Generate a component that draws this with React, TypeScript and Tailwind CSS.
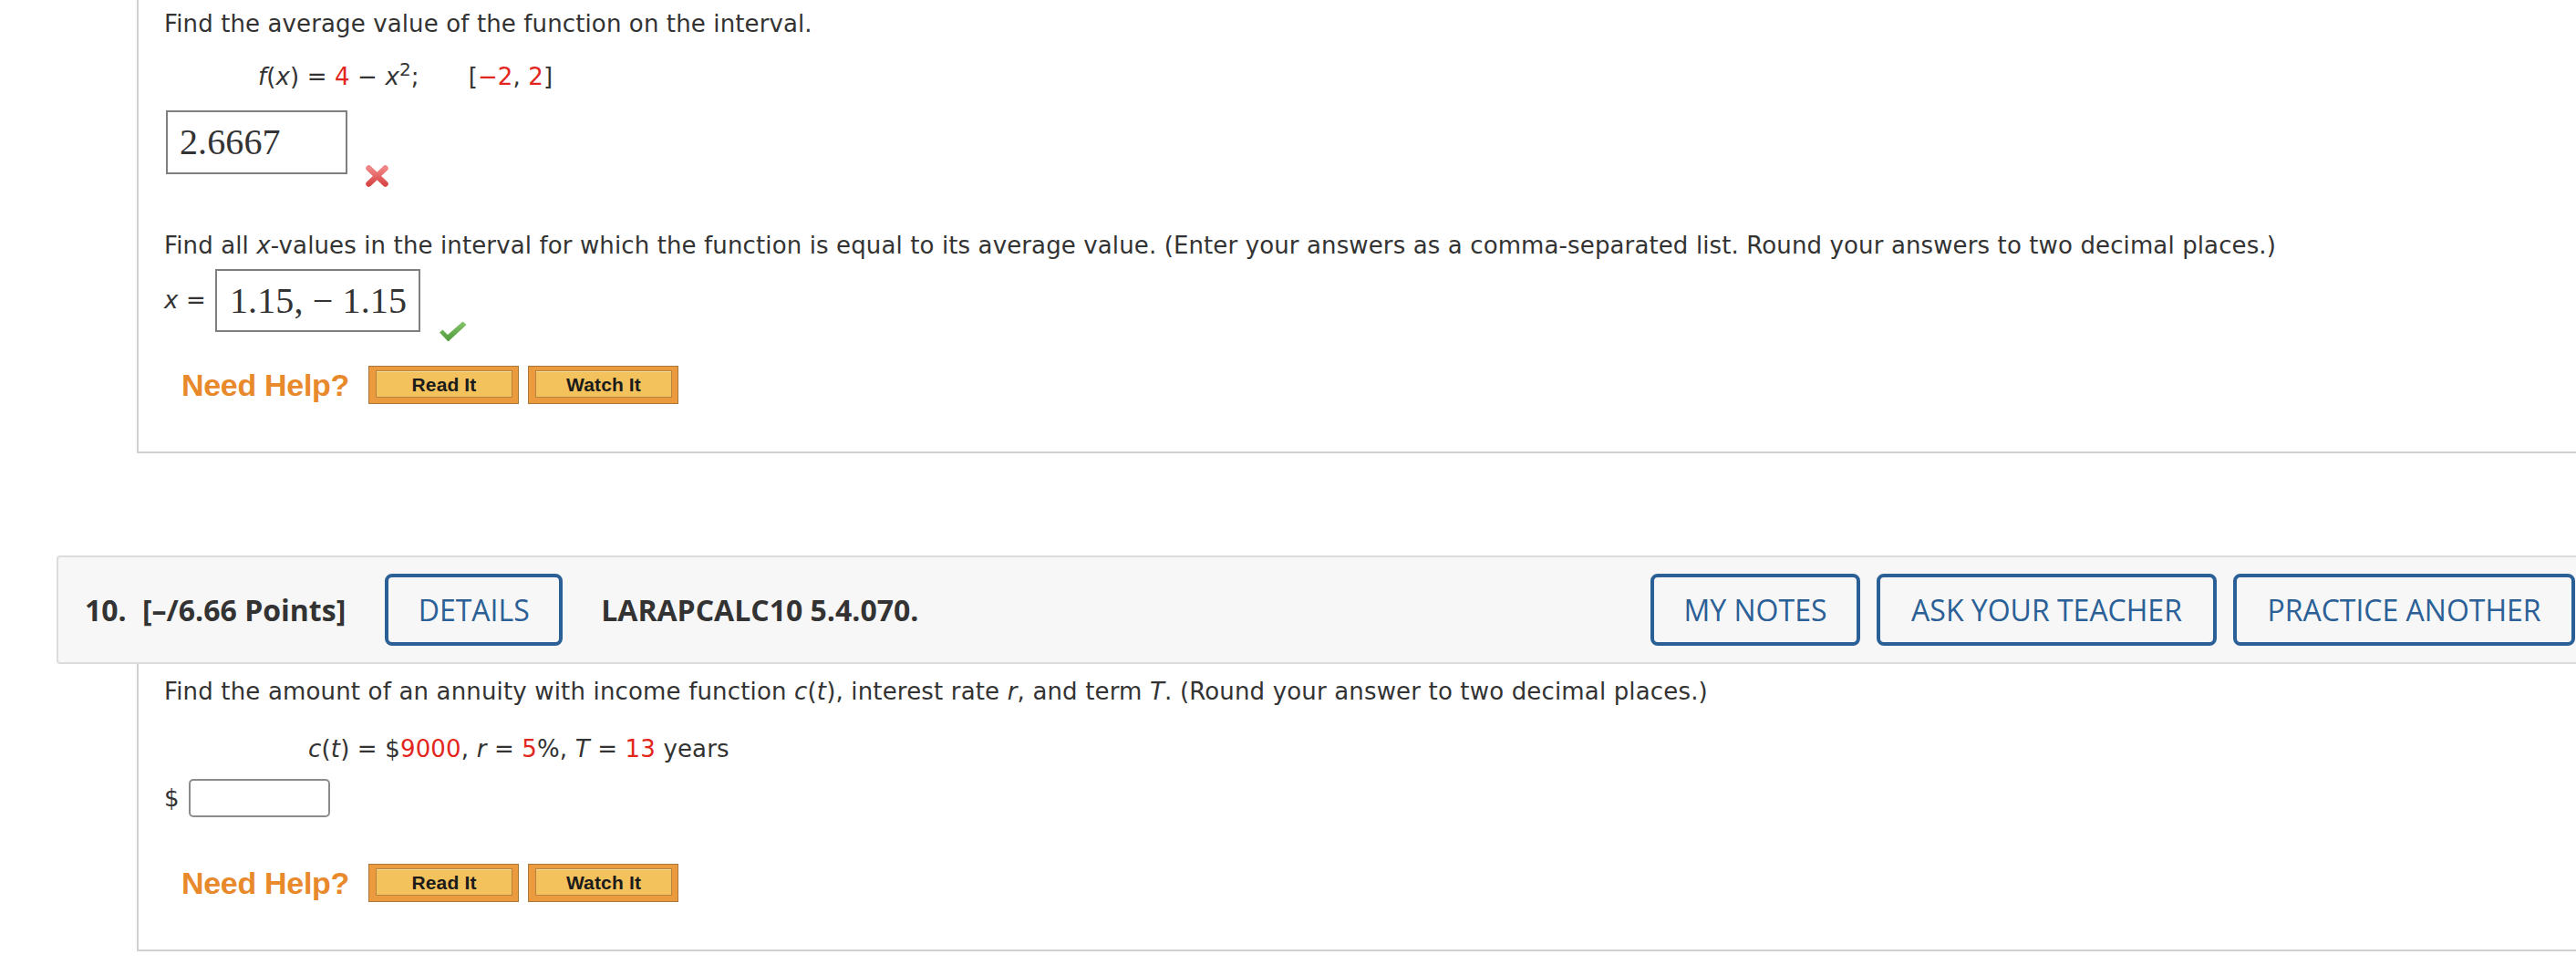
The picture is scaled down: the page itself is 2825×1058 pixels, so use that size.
import React from 'react';

const sans = "font-['DejaVu_Sans',Verdana,sans-serif]";
const serif = "font-['Liberation_Serif','Times_New_Roman',serif]";
const open = "font-['Open_Sans',sans-serif]";
const red = 'text-[#e3261d]';

function XMark() {
	return (
		<svg width="27" height="26" viewBox="0 0 27 26" className="shrink-0">
			<defs>
				<linearGradient id="xg" x1="0" y1="0" x2="0" y2="1">
					<stop offset="0" stopColor="#f08585" />
					<stop offset="1" stopColor="#d94848" />
				</linearGradient>
			</defs>
			<path d="M4.5 4.5 L22.5 21.5 M22.5 4.5 L4.5 21.5" stroke="url(#xg)" strokeWidth="6.5" strokeLinecap="round" />
		</svg>
	);
}

function CheckMark() {
	return (
		<svg width="31" height="23" viewBox="0 0 31 23" className="shrink-0">
			<defs>
				<linearGradient id="cg" x1="0" y1="0" x2="0" y2="1">
					<stop offset="0" stopColor="#86c56c" />
					<stop offset="1" stopColor="#4f9a3a" />
				</linearGradient>
			</defs>
			<path d="M1 12.5 L4.5 9.5 L10 15 L26.5 0.5 L30.5 4 L10.5 22.5 Z" fill="url(#cg)" />
		</svg>
	);
}

function HelpButton({ label, className }: { label: string; className?: string }) {
	return (
		<div
			className={
				'w-[165px] h-[42px] border border-[#a8773d] bg-[#ec9a3e] pt-[4px] pb-[6px] pl-[7px] pr-[6px] ' +
				(className ?? '')
			}
		>
			<div className="h-full border border-[#b8823f] bg-[#f3c25d] shadow-[inset_0_1px_0_#f9dc9a] flex items-center justify-center">
				<span className="font-['Liberation_Sans',Arial,sans-serif] font-bold text-[21px] text-[#1b1b1b] leading-none">
					{label}
				</span>
			</div>
		</div>
	);
}

function NeedHelp() {
	return (
		<div className="flex items-center h-[42px] ml-[19px]">
			<span className="inline-block w-[205px] font-['Liberation_Sans',Arial,sans-serif] font-bold text-[34px] text-[#e8892c] leading-none tracking-[-0.3px]">
				Need Help?
			</span>
			<HelpButton label="Read It" />
			<HelpButton label="Watch It" className="ml-[10px]" />
		</div>
	);
}

function HeaderButton({ label, width }: { label: string; width: string }) {
	return (
		<div
			className={
				'h-[79px] border-[4px] border-[#2b6096] rounded-[8px] flex items-center justify-center text-[#2b6096] text-[32px] font-[500] ' +
				open +
				' ' +
				width
			}
		>
			{label}
		</div>
	);
}

export default function App() {
	return (
		<div className={'w-[2825px] min-h-[1058px] bg-white overflow-hidden text-[#333] ' + sans}>
			{/* question 9 (tail) */}
			<div className="ml-[150px] mr-[-20px] h-[497px] border-l-2 border-b-2 border-[#d0d0d0] pl-[28px] pt-[8px] text-[26px] tracking-[0.12px]">
				<div className="leading-[36px] whitespace-nowrap">Find the average value of the function on the interval.</div>
				<div className="mt-[22px] ml-[103px] leading-[36px] whitespace-nowrap">
					<i>f</i>(<i>x</i>) = <span className={red}>4</span> − <i>x</i>
					<sup className="text-[20px]">2</sup>;<span className="inline-block w-[54px]" />[<span className={red}>−2</span>,{' '}
					<span className={red}>2</span>]
				</div>
				<div className="mt-[19px] ml-[2px] h-[70px] flex items-start">
					<div className={'w-[199px] h-[70px] border-2 border-[#7f7f7f] pl-[13px] flex items-center text-[40px] text-[#333] ' + serif}>
						2.6667
					</div>
					<div className="ml-[19px] mt-[59px]">
						<XMark />
					</div>
				</div>
				<div className="mt-[60px] leading-[36px] whitespace-nowrap">
					Find all <i>x</i>-values in the interval for which the function is equal to its average value. (Enter your answers as a
					comma-separated list. Round your answers to two decimal places.)
				</div>
				<div className="mt-[8px] h-[69px] flex items-start">
					<span className="inline-block w-[56px] leading-[69px]">
						<i>x</i> =
					</span>
					<div className={'w-[225px] h-[69px] border-2 border-[#7f7f7f] pl-[14px] flex items-center text-[40px] text-[#333] ' + serif}>
						1.15, − 1.15
					</div>
					<div className="ml-[20px] mt-[57px]">
						<CheckMark />
					</div>
				</div>
				<div className="mt-[37px]">
					<NeedHelp />
				</div>
			</div>

			{/* question 10 header */}
			<div className="mt-[112px] ml-[62px] mr-[-20px] h-[119px] border-2 border-[#dcdcdc] rounded-[4px] bg-[#f7f7f7] flex items-center pl-[29px] pr-[19px]">
				<span className={'inline-block w-[63px] font-bold text-[32px] text-[#333] ' + open}>10.</span>
				<span className={'font-bold text-[32px] text-[#333] ' + open}>[–/6.66 Points]</span>
				<div className="ml-[43px]">
					<HeaderButton label="DETAILS" width="w-[195px]" />
				</div>
				<span className={'ml-[42px] font-bold text-[32px] text-[#333] ' + open}>LARAPCALC10 5.4.070.</span>
				<div className="ml-auto flex items-center gap-[18px]">
					<HeaderButton label="MY NOTES" width="w-[230px]" />
					<HeaderButton label="ASK YOUR TEACHER" width="w-[373px]" />
					<HeaderButton label="PRACTICE ANOTHER" width="w-[375px]" />
				</div>
			</div>

			{/* question 10 body */}
			<div className="ml-[150px] mr-[-20px] h-[315px] border-l-2 border-b-2 border-[#d0d0d0] pl-[28px] pt-[12px] text-[26px] tracking-[0.16px]">
				<div className="leading-[36px] whitespace-nowrap">
					Find the amount of an annuity with income function <i>c</i>(<i>t</i>), interest rate <i>r</i>, and term <i>T</i>. (Round
					your answer to two decimal places.)
				</div>
				<div className="mt-[27px] ml-[158px] leading-[36px] whitespace-nowrap">
					<i>c</i>(<i>t</i>) = $<span className={red}>9000</span>, <i>r</i> = <span className={red}>5</span>%, <i>T</i> ={' '}
					<span className={red}>13</span> years
				</div>
				<div className="mt-[15px] h-[42px] flex items-center">
					<span className="inline-block w-[27px] leading-[42px]">$</span>
					<div className="w-[155px] h-[42px] border-2 border-[#8c8c8c] rounded-[5px] bg-white" />
				</div>
				<div className="mt-[51px]">
					<NeedHelp />
				</div>
			</div>
		</div>
	);
}
